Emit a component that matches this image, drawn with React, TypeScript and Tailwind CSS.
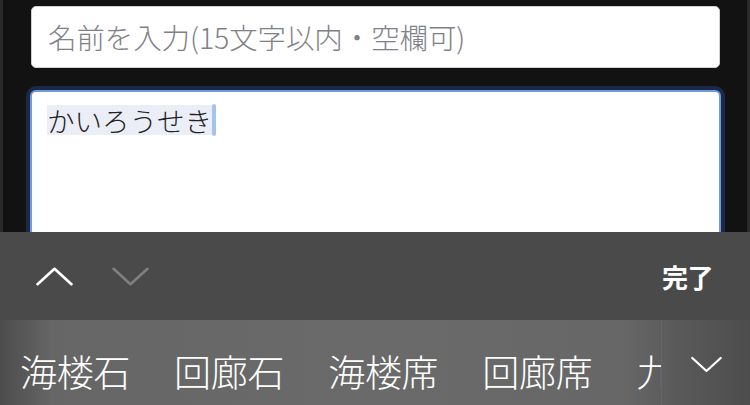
import { type FC } from "react";

const FONT = { fontFamily: '"Noto Sans CJK JP", "Noto Sans", sans-serif' };

const candidates = ["海楼石", "回廊石", "海楼席", "回廊席", "九"];

// ── Chevron (keyboard accessory arrows) ───────────────────────────────────

const Chevron: FC<{ dir: "up" | "down"; color: string; className?: string }> = ({
	dir,
	color,
	className,
}) => (
	<svg
		viewBox="0 0 36 18"
		className={className}
		fill="none"
		stroke={color}
		strokeWidth={2.6}
		strokeLinecap="round"
		strokeLinejoin="round"
	>
		{dir === "up" ? (
			<polyline points="1.5,16.5 18,1.5 34.5,16.5" />
		) : (
			<polyline points="1.5,1.5 18,16.5 34.5,1.5" />
		)}
	</svg>
);

export default function App() {
	return (
		<div className="w-[750px] h-[405px] flex flex-col overflow-hidden" style={FONT}>
			{/* Form area */}
			<div className="h-[232px] shrink-0 flex bg-[#121212] overflow-hidden">
				<div className="w-[3px] bg-[#2a2a2a]" />
				<div className="flex-1 flex flex-col pl-[27px] pr-[26px]">
					<div className="mt-[6px] mx-px h-[62px] shrink-0 flex items-center bg-white border border-[#cfd0d4] rounded-[5px] pl-[16px]">
						<span className="text-[28.5px] font-light text-[#7f8188] tracking-[-0.1px]">
							名前を入力(15文字以内・空欄可)
						</span>
					</div>
					<div className="mt-[22px] h-[170px] shrink-0 bg-white border-2 border-[#6e9ae2] rounded-[6px] shadow-[0_0_0_4px_#1b2846] pl-[15px] pt-[12px]">
						<div className="flex items-center">
							<span className="text-[27.5px] leading-[30px] font-light text-[#222222] bg-[#ebeef6]">
								かいろうせき
							</span>
							<span className="w-[4px] h-[32px] rounded-full bg-[#a8c2ef]" />
						</div>
					</div>
				</div>
				<div className="w-[3px] bg-[#2a2a2a]" />
			</div>

			{/* Accessory toolbar */}
			<div className="h-[88px] shrink-0 flex items-center bg-[#4a4a4a] pl-[36px] pr-[37px]">
				<Chevron dir="up" color="#ffffff" className="w-[37px] h-[19px]" />
				<Chevron dir="down" color="#7f7f7f" className="w-[37px] h-[19px] ml-[39px]" />
				<span className="ml-auto text-[26px] font-bold text-white tracking-[-0.5px]">完了</span>
			</div>

			{/* Conversion candidates */}
			<div className="h-[85px] shrink-0 flex items-center bg-[linear-gradient(to_right,#4c4c4c_0%,#666666_7%,#6a6a6a_50%,#676767_83%,#5a5a5a_90%,#4d4d4d_100%)]">
				<div className="w-[662px] h-full overflow-hidden flex items-center gap-[44px] pl-[20px] pt-[18px] border-r border-white/5">
					{candidates.map((c) => (
						<span
							key={c}
							className="shrink-0 text-[37px] leading-none font-light text-white tracking-[-0.3px]"
						>
							{c}
						</span>
					))}
				</div>
				<Chevron dir="down" color="#ffffff" className="ml-[29px] w-[31px] h-[17px] mt-[4px]" />
			</div>
		</div>
	);
}
